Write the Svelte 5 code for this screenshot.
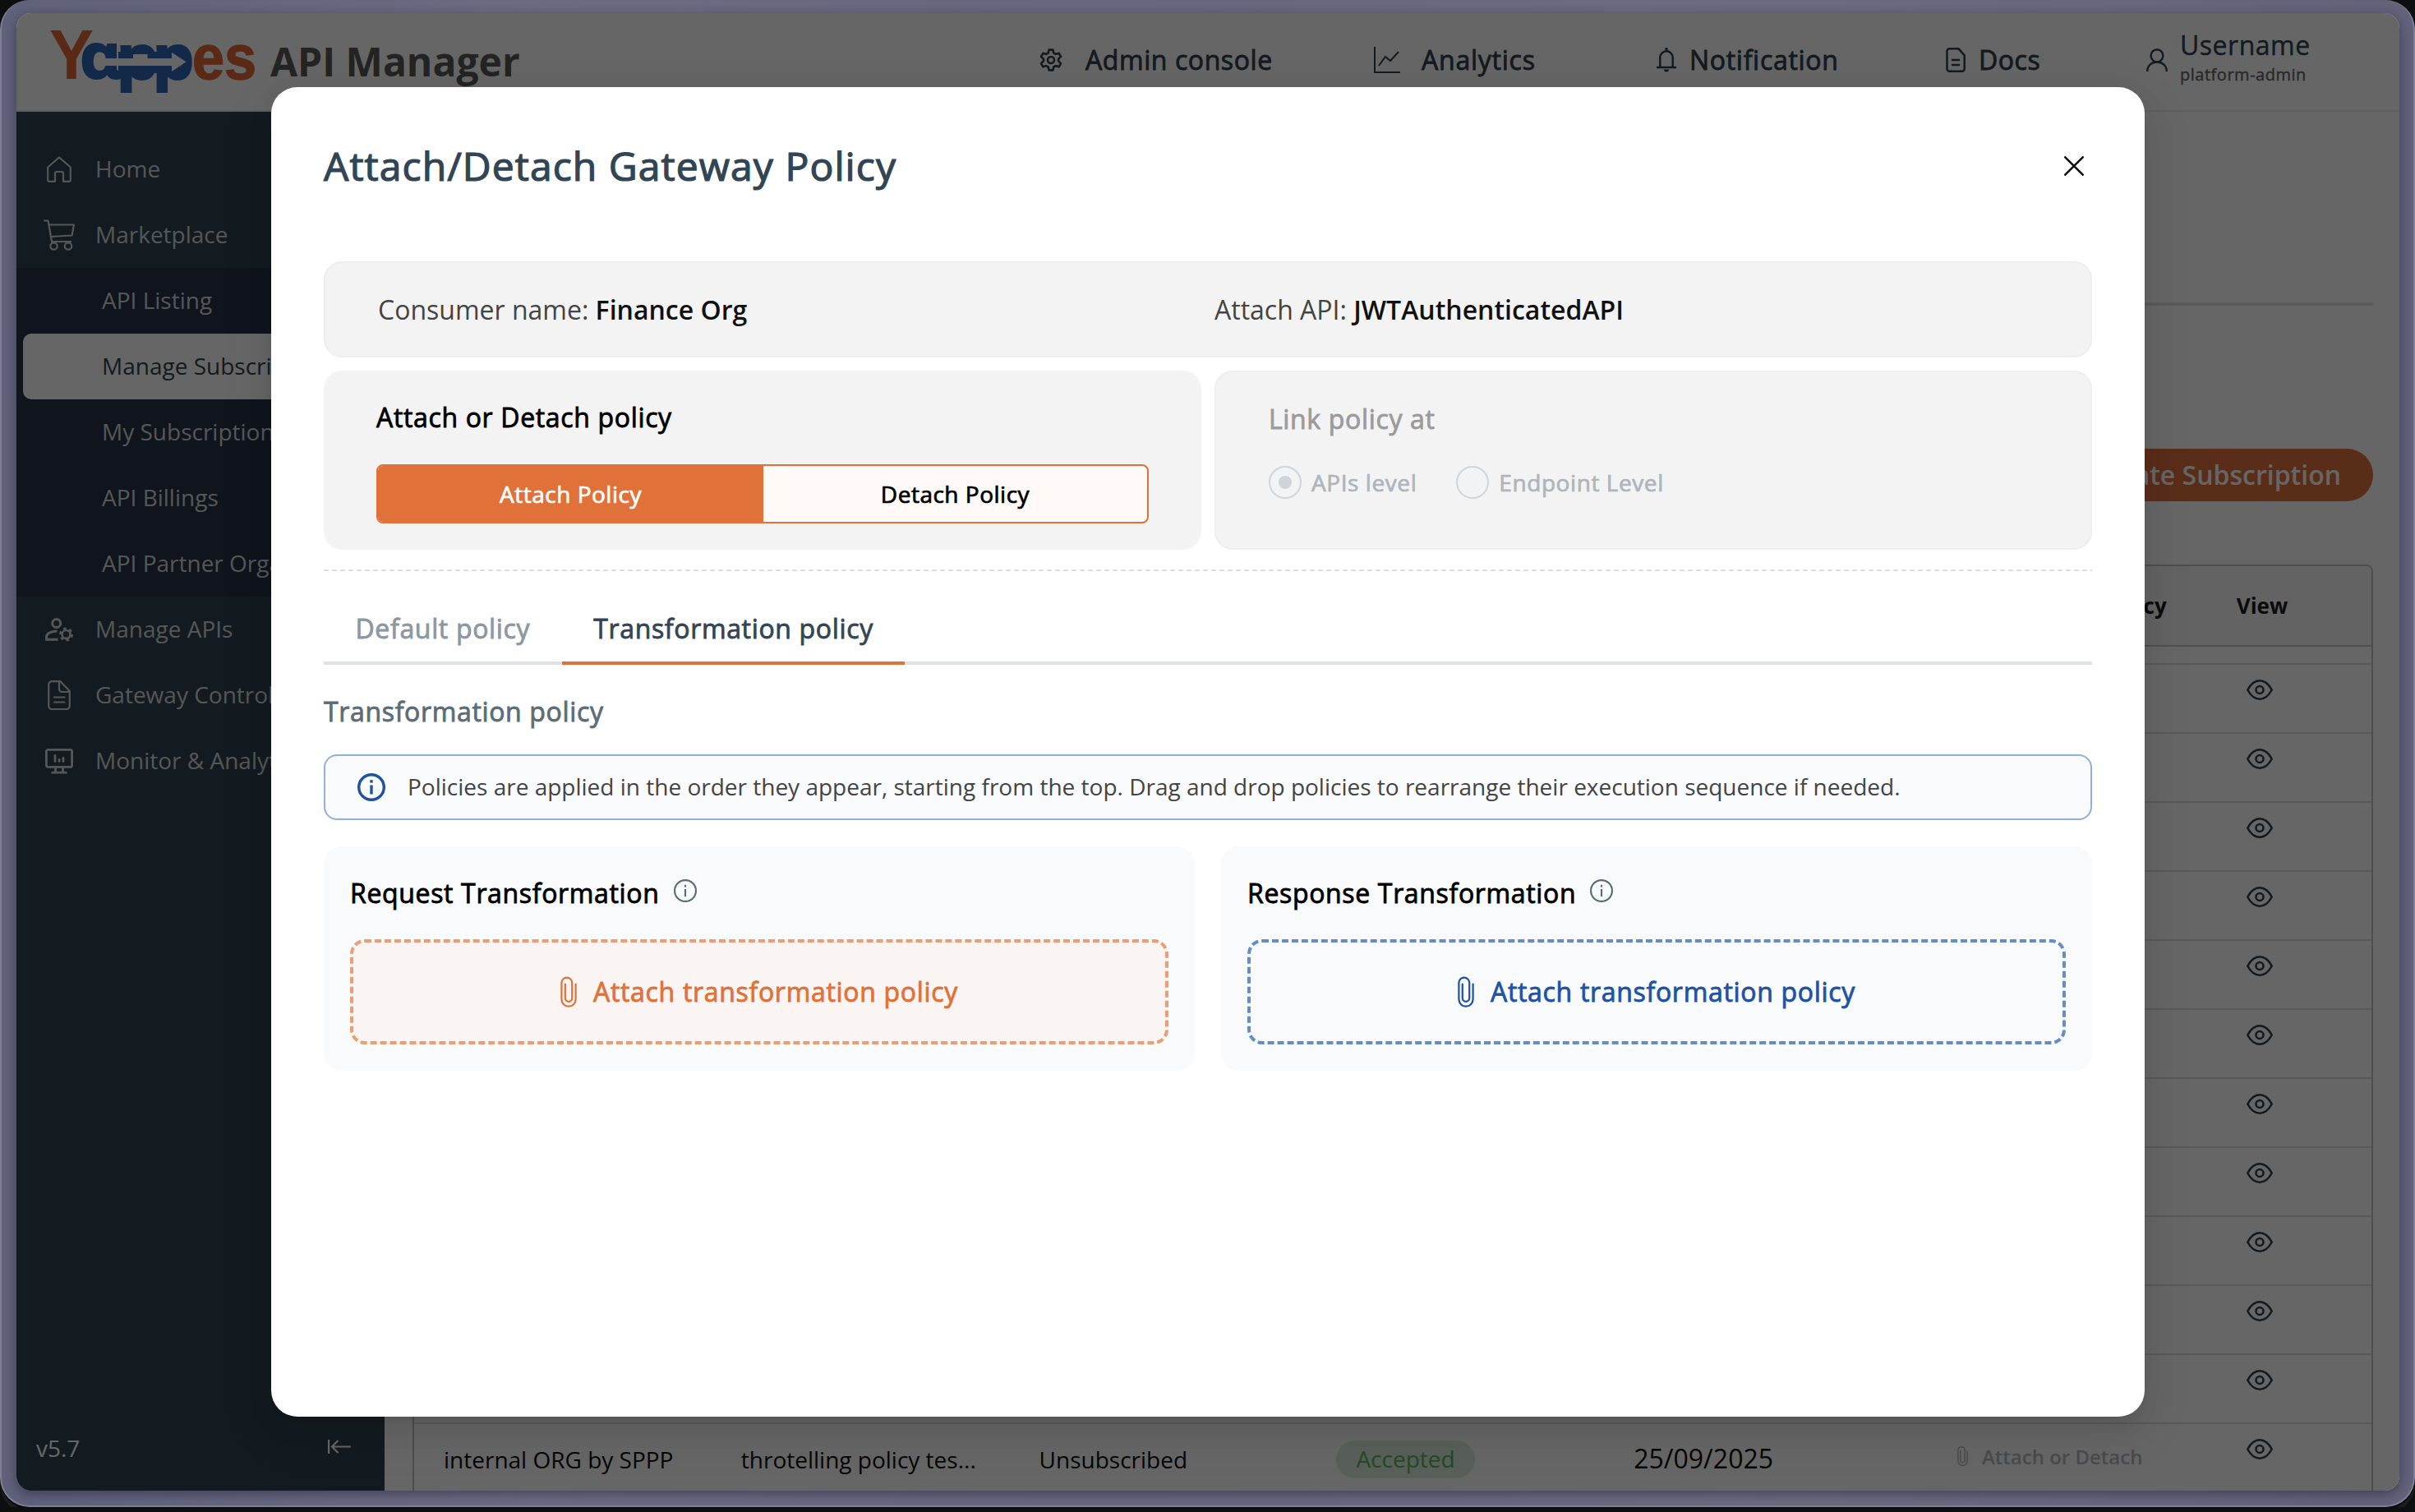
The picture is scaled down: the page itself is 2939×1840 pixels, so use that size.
<script>
  const subItems = [
    'API Listing',
    'Manage Subscriptions',
    'My Subscriptions',
    'API Billings',
    'API Partner Organizations'
  ];

  const rows = Array.from({ length: 12 }, (_, i) => ({ id: i }));
  rows[11] = {
    id: 11,
    org: 'internal ORG by SPPP',
    plan: 'throtelling policy tes...',
    status: 'Unsubscribed',
    approval: 'Accepted',
    date: '25/09/2025'
  };

  const cards = [
    { title: 'Request Transformation', tone: 'orange' },
    { title: 'Response Transformation', tone: 'blue' }
  ];

  const tabs = ['Default policy', 'Transformation policy'];

  let activeItem = $state('Manage Subscriptions');
  let mode = $state('attach');
  let activeTab = $state('Transformation policy');
</script>

{#snippet clip(w, h)}
  <svg width={w} height={h} viewBox="0 0 20 38" fill="none" stroke="currentColor" stroke-width="2.2" stroke-linecap="round">
    <path d="M18.6 9.5v18.6a8.6 8.6 0 0 1-17.2 0V8a6.4 6.4 0 0 1 12.8 0v18.6a4.2 4.2 0 0 1-8.4 0V9.5"></path>
  </svg>
{/snippet}

{#snippet info(size, width)}
  <svg width={size} height={size} viewBox="0 0 34 34" fill="none" stroke="currentColor" stroke-width={width}>
    <circle cx="17" cy="17" r={17 - width / 2}></circle>
    <path d="M17 14.5v11"></path>
    <path d="M17 8.2v3.4"></path>
  </svg>
{/snippet}

<div class="desktop">
  <div class="window">
    <header class="topbar">
      <svg class="logo" width="272" height="112" viewBox="-12 -21 272 112">
        <g font-family="Liberation Sans" font-weight="700">
          <text x="0" y="59" font-size="85" textLength="54" lengthAdjust="spacingAndGlyphs" fill="#e06a3a">Y</text>
          <g fill="#3068b8" stroke="#3068b8" stroke-width="2" font-size="76">
            <text x="37" y="58" font-family="Noto Sans" textLength="50" lengthAdjust="spacingAndGlyphs">ɑ</text>
            <text x="82" y="59" textLength="51" lengthAdjust="spacingAndGlyphs">p</text>
            <text x="126" y="59" textLength="50" lengthAdjust="spacingAndGlyphs">p</text>
            <rect x="84" y="26" width="75" height="26" stroke="none"></rect>
          </g>
          <text x="174" y="59" font-size="76" textLength="78" lengthAdjust="spacingAndGlyphs" fill="#e06a3a" stroke="#e06a3a" stroke-width="1.5">es</text>
        </g>
        <path class="logo-arrow" d="M66 34h36v-5h17.500v5H149v-7.300l17.500 11.600L149 49.900v-7H66z"></path>
      </svg>
      <h1>API Manager</h1>
      <nav class="topnav">
        <a class="nav-item admin" href="#admin">
          <svg width="28" height="28" viewBox="0 0 28 28" fill="none" stroke="currentColor" stroke-width="2.6" stroke-linejoin="round">
            <path d="M11.6 1.6h4.8l.9 3.9 2.5 1.4 3.8-1.2 2.4 4.2-2.9 2.7v2.8l2.9 2.7-2.4 4.2-3.8-1.2-2.5 1.4-.9 3.9h-4.8l-.9-3.9-2.5-1.4-3.8 1.2L2 18.1l2.9-2.7v-2.8L2 9.9l2.4-4.2 3.8 1.2 2.5-1.4z"></path>
            <circle cx="14" cy="14" r="4"></circle>
          </svg>
          Admin console
        </a>
        <a class="nav-item analytics" href="#analytics">
          <svg width="32" height="32" viewBox="0 0 32 32" fill="none" stroke="currentColor" stroke-width="2">
            <path d="M1 0v31h31"></path>
            <path d="M6 23l8-11 6 5L30 6"></path>
          </svg>
          Analytics
        </a>
        <a class="nav-item bell" href="#notification">
          <svg width="24" height="30" viewBox="0 0 24 30" fill="none" stroke="currentColor" stroke-width="2.4">
            <path d="M0 24h24M4.3 24V12a7.7 7.7 0 0 1 15.4 0v12"></path>
            <path d="M12 0v4.5" stroke-width="3"></path>
            <path d="M9 26.5h6a3 3 0 0 1-6 0z" fill="currentColor" stroke="none"></path>
          </svg>
          Notification
        </a>
        <a class="nav-item docs" href="#docs">
          <svg width="24" height="30" viewBox="0 0 24 30" fill="none" stroke="currentColor" stroke-width="2.5">
            <path d="M4.5 1.3h11l7.2 8v16.4a3 3 0 0 1-3 3H4.5a3 3 0 0 1-3-3V4.3a3 3 0 0 1 3-3z"></path>
            <path d="M7 15h10M7 21h10"></path>
          </svg>
          Docs
        </a>
      </nav>
      <div class="user">
        <svg width="26" height="28" viewBox="0 0 26 28" fill="none" stroke="currentColor" stroke-width="2.4">
          <ellipse cx="13" cy="8.8" rx="7.4" ry="7.6"></ellipse>
          <path d="M1.2 28c0-7 5-11.5 11.8-11.5S24.8 21 24.8 28"></path>
        </svg>
        <div class="user-text">
          <span class="user-name">Username</span>
          <span class="user-role">platform-admin</span>
        </div>
      </div>
    </header>

    <div class="body">
      <aside class="sidebar">
        <a class="side-item" href="#home">
          <span class="side-icon">
            <svg width="30" height="32" viewBox="0 0 30 32" fill="none" stroke="currentColor" stroke-width="2.2" stroke-linejoin="round">
              <path d="M1.2 13.5L15 1.5l13.8 12V29a1.8 1.8 0 0 1-1.8 1.8h-7V21a2 2 0 0 0-2-2h-6a2 2 0 0 0-2 2v9.8H3A1.8 1.8 0 0 1 1.2 29z"></path>
            </svg>
          </span>
          Home
        </a>
        <a class="side-item" href="#marketplace">
          <span class="side-icon">
            <svg width="38" height="38" viewBox="0 0 38 38" fill="none" stroke="currentColor" stroke-width="2.2" stroke-linejoin="round">
              <path d="M0 1.5h5.5L10 27h24"></path>
              <path d="M6.5 6.5H37l-2.5 13L9 21"></path>
              <circle cx="12.5" cy="32.5" r="4.2"></circle>
              <circle cx="30" cy="32.5" r="4.2"></circle>
            </svg>
          </span>
          Marketplace
        </a>
        <div class="submenu">
          {#each subItems as item}
            <button class="sub-item" class:active={item === activeItem} onclick={() => (activeItem = item)}>{item}</button>
          {/each}
        </div>
        <a class="side-item" href="#manage">
          <span class="side-icon">
            <svg width="34" height="30" viewBox="0 0 34 30" fill="none" stroke="currentColor" stroke-width="3">
              <circle cx="13.7" cy="7.5" r="5"></circle>
              <path d="M14.5 17C8 17 1.6 20 1.6 23.5v3.7h14"></path>
              <circle cx="25.5" cy="21" r="5" stroke-width="2.6"></circle>
              <circle cx="25.5" cy="21" r="7.2" stroke-width="2.6" stroke-dasharray="3.7 3.84"></circle>
            </svg>
          </span>
          Manage APIs
        </a>
        <a class="side-item" href="#gateway">
          <span class="side-icon">
            <svg width="28" height="36" viewBox="0 0 28 36" fill="none" stroke="currentColor" stroke-width="2.2" stroke-linejoin="round" stroke-linecap="round">
              <path d="M5 1.2h10.500L26.8 13v18a4 4 0 0 1-4 4H5.2a4 4 0 0 1-4-4V5.2a4 4 0 0 1 4-4z"></path>
              <path d="M14 1.5v9a3.5 3.5 0 0 0 3.5 3.5h9"></path>
              <path d="M8 20.5h12.5M8 26.5h12.5"></path>
            </svg>
          </span>
          Gateway Controls
        </a>
        <a class="side-item" href="#monitor">
          <span class="side-icon">
            <svg width="34" height="31" viewBox="0 0 34 31" fill="none" stroke="currentColor" stroke-width="2.8" stroke-linecap="round" stroke-linejoin="round">
              <rect x="1.4" y="1.4" width="31.2" height="21" rx="2"></rect>
              <path d="M12 8.5v7M17 13.5v2M22 11.5v4M12.5 23v6M21.5 23v6M8.5 29.2h17"></path>
            </svg>
          </span>
          Monitor &amp; Analytics
        </a>
        <div class="side-foot">
          <span>v5.7</span>
          <svg width="28" height="17" viewBox="0 0 28 17" fill="none" stroke="currentColor" stroke-width="2.2">
            <path d="M1.1 0v17M28 8.5H5M12.5 1L5 8.5l7.5 7.5"></path>
          </svg>
        </div>
      </aside>

      <main class="content">
        <div class="page-head"></div>
        <div class="toolbar">
          <button class="create">Create Subscription</button>
        </div>
        <div class="table">
          <div class="tr thead">
            <span class="policy-col">Policy</span>
            <span class="view-col">View</span>
          </div>
          <div class="gap-row"></div>
          {#each rows as row (row.id)}
            <div class="tr">
              <span class="td">{row.org ?? ''}</span>
              <span class="td">{row.plan ?? ''}</span>
              <span class="td status">{row.status ?? ''}</span>
              <span class="td">
                {#if row.approval}<span class="badge">{row.approval}</span>{/if}
              </span>
              <span class="td date">{row.date ?? ''}</span>
              <span class="td attach">
                {#if row.org}{@render clip(13, 26)} Attach or Detach{/if}
              </span>
              <span class="td eye">
                <svg width="32" height="25" viewBox="0 0 32 25" fill="none" stroke="currentColor" stroke-width="2.6">
                  <path d="M1.3 12.5C5 5.5 10 1.3 16 1.3s11 4.2 14.7 11.2C27 19.5 22 23.7 16 23.7S5 19.5 1.3 12.5z"></path>
                  <circle cx="16" cy="12.5" r="4.5"></circle>
                </svg>
              </span>
            </div>
          {/each}
        </div>
      </main>
    </div>

    <!-- Gateway policy dialog -->
    <div class="overlay">
      <div class="modal" role="dialog" aria-label="Attach/Detach Gateway Policy">
        <div class="modal-head">
          <h2>Attach/Detach Gateway Policy</h2>
          <button class="close" aria-label="Close">
            <svg width="24" height="24" viewBox="0 0 24 24" stroke="currentColor" stroke-width="2.6" stroke-linecap="round">
              <path d="M1.3 1.3l21.4 21.4M22.7 1.3L1.3 22.7"></path>
            </svg>
          </button>
        </div>

        <div class="summary">
          <p>Consumer name: <b>Finance Org</b></p>
          <p>Attach API: <b>JWTAuthenticatedAPI</b></p>
        </div>

        <div class="options">
          <section class="panel">
            <h3>Attach or Detach policy</h3>
            <div class="segmented">
              <button class:selected={mode === 'attach'} onclick={() => (mode = 'attach')}>Attach Policy</button>
              <button class:selected={mode === 'detach'} onclick={() => (mode = 'detach')}>Detach Policy</button>
            </div>
          </section>
          <section class="panel disabled">
            <h3>Link policy at</h3>
            <div class="radios">
              <span class="radio"><i class="dot checked"></i>APIs level</span>
              <span class="radio"><i class="dot"></i>Endpoint Level</span>
            </div>
          </section>
        </div>

        <div class="divider"></div>

        <div class="tabs">
          {#each tabs as tab}
            <button class="tab" class:active={tab === activeTab} onclick={() => (activeTab = tab)}>{tab}</button>
          {/each}
        </div>

        <h4>{activeTab}</h4>

        <div class="alert">
          {@render info(34, 3.4)}
          <span>Policies are applied in the order they appear, starting from the top. Drag and drop policies to rearrange their execution sequence if needed.</span>
        </div>

        <div class="cards">
          {#each cards as card}
            <section class="card">
              <div class="card-title">
                <h3>{card.title}</h3>
                {@render info(28, 2.6)}
              </div>
              <button class="drop {card.tone}">
                {@render clip(20, 38)}
                <span>Attach transformation policy</span>
              </button>
            </section>
          {/each}
        </div>
      </div>
    </div>
  </div>
</div>

<style>
  :global(body) {
    background: #0c0e0f;
    overflow: hidden;
  }

  .desktop,
  .desktop :global(*) {
    box-sizing: border-box;
  }

  .desktop {
    width: 2939px;
    height: 1834px;
    padding: 16px 17px 18px 18px;
    border: 2px solid #7f8096;
    border-top: 0;
    border-radius: 36px;
    background: linear-gradient(90deg, #60617a 0%, #6b6c82 22%, #67677f 45%, #6b6b80 75%, #62627a 100%);
    box-shadow: 0 2px 0 #000, 0 8px 0 #1c1c1d;
    font-family: 'Open Sans', 'Noto Sans', sans-serif;
    color: #111;
  }

  .window {
    position: relative;
    display: flex;
    flex-direction: column;
    width: 2900px;
    height: 1798px;
    border-radius: 18px;
    overflow: hidden;
    background: #fff;
    box-shadow: 0 4px 14px rgba(20, 20, 45, 0.45);
  }

  button {
    font: inherit;
    letter-spacing: inherit;
    color: inherit;
    border: 0;
    margin: 0;
    padding: 0;
    background: none;
    cursor: pointer;
  }

  a {
    color: inherit;
    text-decoration: none;
  }

  h1,
  h2,
  h3,
  h4,
  p {
    margin: 0;
  }

  svg {
    flex-shrink: 0;
    display: block;
  }

  /* Medium weight: regular, slightly widened and thickened */
  h2,
  h3,
  h4,
  .nav-item,
  .user-text,
  .segmented,
  .radios,
  .tab,
  .drop {
    font-weight: 400;
    letter-spacing: 0.0205em;
    -webkit-text-stroke: 0.026em currentColor;
  }

  /* Top bar */
  .topbar {
    display: flex;
    height: 120px;
    flex-shrink: 0;
    border-bottom: 2px solid #eee;
    color: #344451;
    white-space: nowrap;
  }

  .logo {
    margin-left: 28px;
  }

  .logo-arrow {
    fill: #fff;
  }

  h1 {
    width: 304px;
    margin: 26px 0 0 9px;
    font-size: 48px;
    line-height: 66px;
    font-weight: 700;
    color: #5a5a5a;
  }

  .topnav {
    display: flex;
    height: 113px;
    margin-left: 632px;
  }

  .nav-item {
    display: flex;
    align-items: center;
    font-size: 32px;
    letter-spacing: 0.018em;
  }

  .admin {
    width: 407px;
    gap: 28px;
  }

  .analytics {
    width: 344px;
    gap: 26px;
    letter-spacing: 0.024em;
  }

  .bell {
    width: 352px;
    gap: 16px;
    letter-spacing: 0.022em;
  }

  .docs {
    width: 244px;
    gap: 16px;
  }

  .user {
    display: flex;
    align-items: center;
    height: 113px;
    gap: 15px;
  }

  .user-text {
    display: flex;
    flex-direction: column;
    padding-bottom: 3px;
  }

  .user-name {
    font-size: 32px;
    line-height: 40px;
    letter-spacing: 0.016em;
  }

  .user-role {
    font-size: 20px;
    line-height: 32px;
    letter-spacing: 0.026em;
    color: #666;
  }

  /* Sidebar */
  .body {
    display: flex;
    flex: 1;
    min-height: 0;
  }

  .sidebar {
    display: flex;
    flex-direction: column;
    width: 448px;
    padding-top: 30px;
    flex-shrink: 0;
    background: #324452;
    color: #d4d8db;
    font-size: 28px;
    white-space: nowrap;
    overflow: hidden;
  }

  .side-item {
    display: flex;
    align-items: center;
    height: 80px;
    padding: 0 0 2px 32px;
    gap: 25px;
  }

  .side-icon {
    display: flex;
    justify-content: center;
    width: 39px;
    padding-top: 2px;
  }

  .submenu {
    background: #2a3446;
  }

  .sub-item {
    display: block;
    width: 432px;
    height: 80px;
    margin-left: 8px;
    padding: 0 0 2px 96px;
    border-radius: 10px;
    text-align: left;
  }

  .sub-item.active {
    background: #fff;
    color: #344451;
  }

  .side-foot {
    display: flex;
    justify-content: space-between;
    align-items: center;
    height: 104px;
    margin-top: auto;
    padding: 0 41px 0 24px;
    color: #fff;
  }

  .side-foot svg {
    margin-bottom: 4px;
  }

  /* Content */
  .content {
    display: flex;
    flex-direction: column;
    flex: 1;
    padding: 0 32px 0 34px;
  }

  .page-head {
    height: 236px;
    flex-shrink: 0;
    border-bottom: 4px solid #e4e4e6;
  }

  .toolbar {
    display: flex;
    justify-content: flex-end;
    padding: 174px 0 77px;
  }

  .create {
    height: 64px;
    padding: 0 39px 2px;
    border-radius: 32px;
    background: #e07040;
    color: #fff;
    font-size: 32px;
    font-weight: 600;
  }

  .table {
    height: 1140px;
    flex-shrink: 0;
    border: 2px solid #c4c4ca;
    border-radius: 8px;
    overflow: hidden;
    font-size: 28px;
    white-space: nowrap;
  }

  .tr {
    display: grid;
    grid-template-columns: repeat(6, 361.8px) 1fr;
    height: 84px;
    border-bottom: 2px solid #dddde8;
  }

  .thead {
    height: 98px;
    align-items: center;
    border-bottom-color: #c8c8ca;
    background: #f8f8f8;
    font-size: 26px;
    font-weight: 700;
    color: #1c1c1c;
  }

  .policy-col {
    grid-column: 6;
    padding-right: 38px;
    text-align: right;
  }

  .view-col {
    padding-left: 47px;
  }

  .gap-row {
    height: 22px;
    border-bottom: 2px solid #dddde8;
  }

  .td {
    display: flex;
    align-items: center;
    padding: 3px 0 0 36px;
  }

  .status {
    padding-left: 37px;
  }

  .badge {
    height: 46px;
    margin-left: 1px;
    padding: 0 24px;
    border-radius: 23px;
    background: #dcefdf;
    color: #58b95c;
    line-height: 45px;
  }

  .date {
    padding: 0 0 0 37px;
    font-size: 32px;
  }

  .attach {
    gap: 17px;
    padding: 0 0 4px 69px;
    font-size: 24px;
    font-weight: 600;
    color: #b8babf;
  }

  .eye {
    padding: 0 0 22px 59px;
    color: #344451;
  }

  /* Dialog */
  .overlay {
    position: absolute;
    inset: 0;
    padding: 90px 310px;
    background: rgba(0, 0, 0, 0.6);
  }

  .modal {
    height: 1618px;
    padding: 0 64px;
    border-radius: 32px;
    background: #fff;
    box-shadow:
      0 12px 32px rgba(0, 0, 0, 0.08),
      0 6px 12px -8px rgba(0, 0, 0, 0.12),
      0 18px 56px 16px rgba(0, 0, 0, 0.05);
  }

  .modal-head {
    display: flex;
    justify-content: space-between;
    align-items: center;
    height: 212px;
    padding: 0 10px 22px 0;
  }

  h2 {
    font-size: 48px;
    letter-spacing: 0.0225em;
    color: #324554;
  }

  .close {
    padding-top: 2px;
    color: #111;
  }

  .summary {
    display: grid;
    grid-template-columns: 1018px 1fr;
    align-items: center;
    height: 117px;
    padding-left: 64px;
    border: 2px solid #eee;
    border-radius: 22px;
    background: #f3f3f3;
    font-size: 32px;
    color: #444;
  }

  .summary b {
    font-weight: 600;
    color: #111;
  }

  .options {
    display: grid;
    grid-template-columns: 1fr 1fr;
    gap: 16px;
    margin-top: 16px;
  }

  .panel {
    height: 218px;
    padding: 35px 64px 0;
    border-radius: 22px;
    background: #f3f3f3;
  }

  h3 {
    font-size: 32px;
    line-height: 44px;
    color: #000;
  }

  .segmented {
    display: grid;
    grid-template-columns: 469px 1fr;
    height: 72px;
    margin-top: 35px;
    border: 2px solid #e07139;
    border-radius: 8px;
    overflow: hidden;
    background: #fff9f7;
    font-size: 28px;
    letter-spacing: 0.018em;
    color: #000;
  }

  .segmented .selected {
    background: #e07139;
    color: #fff;
  }

  .disabled {
    border: 2px solid #eee;
  }

  .disabled h3 {
    color: #9b9b9b;
  }

  .radios {
    display: flex;
    gap: 48px;
    margin-top: 35px;
    font-size: 28px;
    color: #adb5bd;
  }

  .radio {
    display: flex;
    align-items: center;
    gap: 12px;
    height: 40px;
  }

  .dot {
    display: flex;
    align-items: center;
    justify-content: center;
    width: 40px;
    height: 40px;
    border: 2px solid #d0d5db;
    border-radius: 50%;
    background: #f1f3f5;
  }

  .checked::before {
    content: '';
    width: 16px;
    height: 16px;
    border-radius: 50%;
    background: #ced4da;
  }

  .divider {
    height: 2px;
    margin-top: 24px;
    background: repeating-linear-gradient(90deg, #dedede 0 6px, transparent 6px 10px);
  }

  .tabs {
    display: flex;
    height: 114px;
    border-bottom: 4px solid #dee2e8;
  }

  .tab {
    height: 114px;
    padding: 28px 38.5px 0;
    border-bottom: 4px solid transparent;
    font-size: 32px;
    color: #8c98a1;
  }

  .tab.active {
    border-color: #e07139;
    color: #324554;
  }

  h4 {
    margin-top: 35px;
    font-size: 32px;
    line-height: 44px;
    color: #5a6c78;
  }

  .alert {
    display: flex;
    align-items: center;
    gap: 27px;
    height: 80px;
    margin-top: 30px;
    padding-left: 39px;
    border: 2px solid #92b0d8;
    border-radius: 16px;
    background: #f8fafc;
    font-size: 28px;
    color: #444;
    white-space: nowrap;
  }

  .alert span {
    padding-bottom: 2px;
  }

  .alert :global(svg) {
    color: #1f52a3;
  }

  .cards {
    display: grid;
    grid-template-columns: 1fr 1fr;
    gap: 32px;
    margin-top: 32px;
  }

  .card {
    height: 273px;
    padding: 35px 32px 0;
    border-radius: 22px;
    background: #f8fafc;
  }

  .card-title {
    display: flex;
    gap: 17px;
    color: #5a6c78;
  }

  .card-title :global(svg) {
    margin-top: 5px;
  }

  .drop {
    display: flex;
    align-items: center;
    justify-content: center;
    gap: 20px;
    width: 100%;
    height: 128px;
    margin-top: 34px;
    border: 4px dashed;
    border-radius: 18px;
    font-size: 32px;
    letter-spacing: 0.0215em;
  }

  .drop span {
    padding-bottom: 2px;
  }

  .drop.orange {
    border-color: #eb9d74;
    background: #faf5f2;
    color: #e07139;
  }

  .drop.blue {
    border-color: #638dc4;
    color: #1f52a3;
  }
</style>
